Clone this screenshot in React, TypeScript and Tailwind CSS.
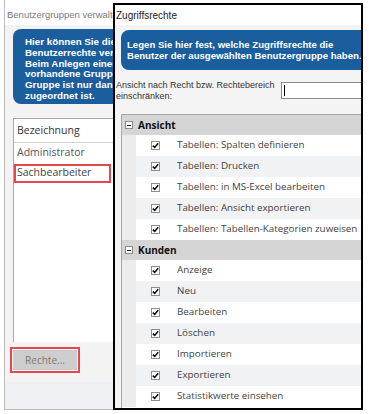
import React from "react";

const ansicht = [
  "Tabellen: Spalten definieren",
  "Tabellen: Drucken",
  "Tabellen: in MS-Excel bearbeiten",
  "Tabellen: Ansicht exportieren",
  "Tabellen: Tabellen-Kategorien zuweisen",
];

const kunden = [
  "Anzeige",
  "Neu",
  "Bearbeiten",
  "Löschen",
  "Importieren",
  "Exportieren",
  "Statistikwerte einsehen",
];

function Check() {
  return (
    <div className="shrink-0 w-[9px] h-[9px] border border-[#8e8e8e] bg-white flex items-center justify-center">
      <svg width="7" height="7" viewBox="0 0 7 7">
        <path d="M0.8 3.6 L2.7 5.4 L6.2 1.2" stroke="#111" strokeWidth="1.6" fill="none" />
      </svg>
    </div>
  );
}

function GroupHeader({ title }: { title: string }) {
  return (
    <div className="h-[20px] bg-[#d5d5d5] flex items-center pl-[3px]">
      <div className="shrink-0 w-[8px] h-[8px] border border-[#8a8a8a] bg-white flex items-center justify-center">
        <div className="w-[4px] h-[1px] bg-[#222]" />
      </div>
      <span className="ml-[5px] text-[10px] font-bold text-[#111]">{title}</span>
    </div>
  );
}

function Row({ text, i }: { text: string; i: number }) {
  return (
    <div className="h-[21px] flex">
      <div className="shrink-0 w-[14px] bg-[#ececec]" />
      <div className={`flex-1 min-w-0 overflow-hidden flex items-center pl-[15px] ${i % 2 === 1 ? "bg-[#f1f2f4]" : "bg-white"}`}>
        <Check />
        <span className="ml-[17px] text-[9.8px] text-[#3f3f3f] whitespace-nowrap">{text}</span>
      </div>
    </div>
  );
}

export default function App() {
  return (
    <div className="relative w-[369px] h-[414px] bg-white overflow-hidden font-['Open_Sans',sans-serif]">
      {/* Benutzergruppen verwalten (hinten) */}
      <div className="absolute left-[4px] top-0 w-[150px] h-[410px] border-l border-b border-[#bdbdbd] flex flex-col">
        <div className="h-[25px] bg-white flex items-center pl-[2px] pt-[5px]">
          <span className="font-['Liberation_Sans',sans-serif] text-[9.5px] text-[#7a7a7a] whitespace-nowrap">Benutzergruppen verwalten</span>
        </div>
        <div className="flex-1 bg-[#f3f3f3] flex flex-col">
          <div className="ml-[8px] mt-[4px] h-[75px] w-[160px] bg-[#1b5e9e] rounded-[8px] pl-[12px] pt-[8px] font-['Liberation_Sans',sans-serif] text-[9.8px] leading-[10.8px] font-bold text-white whitespace-nowrap">
            <div>Hier können Sie die Benutzerrechte</div>
            <div>Benutzerrechte verwalten.</div>
            <div>Beim Anlegen einer neuen</div>
            <div>vorhandene Gruppe kopieren.</div>
            <div>Gruppe ist nur dann aktiv, wenn</div>
            <div>zugeordnet ist.</div>
          </div>
          <div className="ml-[8px] mt-[14px] h-[224px] bg-white border-l border-t border-[#a8a8a8] flex flex-col">
            <div className="h-[24px] border-b border-[#d3d3d3] flex items-center pl-[3px]">
              <span className="text-[10.5px] text-[#333]">Bezeichnung</span>
            </div>
            <div className="h-[20px] flex items-center pl-[3px]">
              <span className="text-[10.5px] text-[#555]">Administrator</span>
            </div>
            <div className="h-[20px] flex items-center">
              <div className="w-[97px] h-[19px] border-2 border-[#e5484b] flex items-center pl-[1px]">
                <span className="text-[10.5px] text-[#444]">Sachbearbeiter</span>
              </div>
            </div>
          </div>
          <div className="ml-[8px] mt-[8px] w-[64px] h-[20px] bg-[#cdcdcd] outline-2 outline-offset-1 outline-[#e5484b] flex items-center justify-center">
            <span className="text-[10px] text-[#7a7a7a]">Rechte...</span>
          </div>
          <div className="mt-[12px] flex-1 bg-[#eef0f3]" />
        </div>
      </div>

      {/* Zugriffsrechte (vorne) */}
      <div className="absolute left-[113px] top-[3px] w-[250px] h-[407px] border-2 border-black bg-[#f4f4f4] flex flex-col overflow-hidden">
        <div className="h-[20px] bg-white flex items-center pl-[1px]">
          <span className="font-['Liberation_Sans',sans-serif] text-[10px] text-[#222]">Zugriffsrechte</span>
        </div>
        <div className="ml-[6px] mt-[5px] -mr-[12px] h-[40px] bg-[#1b5e9e] rounded-[8px] pl-[6px] flex flex-col justify-center font-['Liberation_Sans',sans-serif] text-[9.6px] leading-[11px] font-bold text-white whitespace-nowrap">
          <div>Legen Sie hier fest, welche Zugriffsrechte die</div>
          <div>Benutzer der ausgewählten Benutzergruppe haben.</div>
        </div>
        <div className="mt-[12px] h-[17px] flex items-center">
          <div className="w-[166px] pl-[1px] font-['Liberation_Sans',sans-serif] text-[9px] leading-[11px] text-[#333] whitespace-nowrap">
            <div>Ansicht nach Recht bzw. Rechtebereich</div>
            <div>einschränken:</div>
          </div>
          <div className="flex-1 h-[17px] bg-white border border-r-0 border-[#8a8a8a] flex items-center pl-[2px]">
            <div className="w-[1px] h-[11px] bg-black" />
          </div>
        </div>
        <div className="ml-[6px] mt-[15px] flex-1 bg-white border-l border-t border-[#a5a5a5] flex flex-col">
          <GroupHeader title="Ansicht" />
          {ansicht.map((t, i) => (
            <Row key={t} text={t} i={i} />
          ))}
          <GroupHeader title="Kunden" />
          {kunden.map((t, i) => (
            <Row key={t} text={t} i={i} />
          ))}
        </div>
      </div>
    </div>
  );
}
